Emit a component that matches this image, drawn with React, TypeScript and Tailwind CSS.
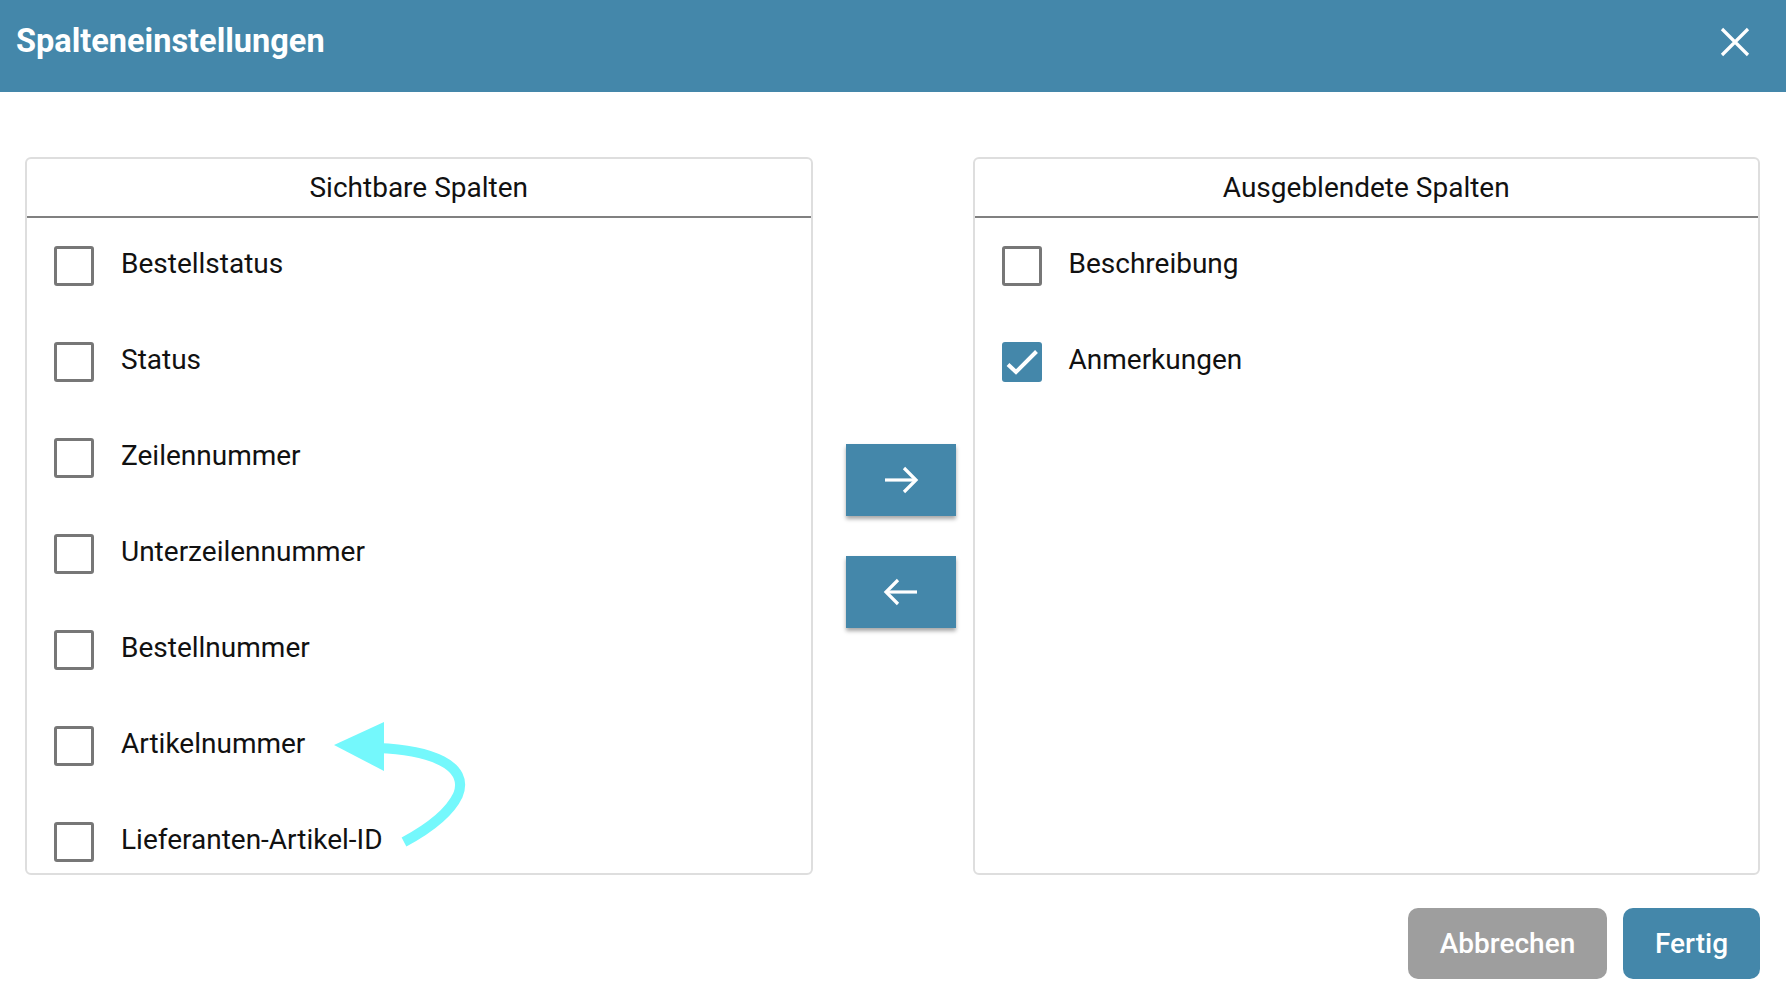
import { useState } from 'react';

const visibleCols = [
  'Bestellstatus',
  'Status',
  'Zeilennummer',
  'Unterzeilennummer',
  'Bestellnummer',
  'Artikelnummer',
  'Lieferanten-Artikel-ID',
];

const hiddenCols = ['Beschreibung', 'Anmerkungen'];

function Checkbox({ checked }: { checked: boolean }) {
  if (checked) {
    return (
      <div className="w-[40px] h-[40px] rounded-[3px] bg-[#4487aa] shrink-0">
        <svg width="40" height="40" viewBox="0 0 40 40" fill="none">
          <path d="M6 22.5 L14 30 L34.5 9.5" stroke="white" strokeWidth="4" />
        </svg>
      </div>
    );
  }
  return <div className="w-[40px] h-[40px] rounded-[3px] border-[3px] border-[#777777] bg-white shrink-0" />;
}

function ColumnPanel({
  title,
  items,
  checked,
  onToggle,
}: {
  title: string;
  items: string[];
  checked: string[];
  onToggle: (name: string) => void;
}) {
  return (
    <div className="flex-1 flex flex-col border-2 border-[#dedede] rounded-[6px] overflow-hidden bg-white">
      {/* Panel header */}
      <div className="h-[59px] shrink-0 flex items-center justify-center border-b-2 border-[#808080] text-[28px] text-[#111]">
        {title}
      </div>
      <div className="flex-1 overflow-hidden">
        {items.map((name) => (
          <div key={name} className="h-[96px] flex items-center pl-[27px] cursor-pointer" onClick={() => onToggle(name)}>
            <Checkbox checked={checked.includes(name)} />
            <span className="ml-[27px] text-[28px] text-[#111] -translate-y-[2px]">{name}</span>
          </div>
        ))}
      </div>
    </div>
  );
}

function ArrowButton({ dir }: { dir: 'right' | 'left' }) {
  return (
    <button className="w-[110px] h-[72px] bg-[#4487aa] flex items-center justify-center shadow-[0_3px_4px_rgba(0,0,0,0.35)]">
      <svg width="40" height="40" viewBox="0 0 40 40" fill="none" stroke="white" strokeWidth="3.2">
        {dir === 'right' ? (
          <>
            <path d="M4 20 H35" />
            <path d="M23 8 L35 20 L23 32" />
          </>
        ) : (
          <>
            <path d="M5 20 H36" />
            <path d="M17 8 L5 20 L17 32" />
          </>
        )}
      </svg>
    </button>
  );
}

export default function App() {
  const [leftChecked, setLeftChecked] = useState<string[]>([]);
  const [rightChecked, setRightChecked] = useState<string[]>(['Anmerkungen']);

  const toggle = (list: string[], set: (v: string[]) => void) => (name: string) =>
    set(list.includes(name) ? list.filter((n) => n !== name) : [...list, name]);

  return (
    <div className="w-[1786px] h-[1008px] bg-white flex flex-col relative overflow-hidden" style={{ fontFamily: 'Roboto, "Noto Sans", sans-serif' }}>
      {/* Title bar */}
      <div className="h-[92px] shrink-0 bg-[#4487aa] flex items-center justify-between pl-[16px] pr-[36px] pb-[9px]">
        <h1 className="text-[32.5px] font-bold text-white">Spalteneinstellungen</h1>
        <button className="w-[30px] h-[30px] flex items-center justify-center">
          <svg width="30" height="30" viewBox="0 0 30 30" stroke="white" strokeWidth="3.2">
            <path d="M2 2 L28 28 M28 2 L2 28" />
          </svg>
        </button>
      </div>

      {/* Panels */}
      <div className="mt-[65px] h-[718px] flex pl-[25px] pr-[26px]">
        <ColumnPanel title="Sichtbare Spalten" items={visibleCols} checked={leftChecked} onToggle={toggle(leftChecked, setLeftChecked)} />
        <div className="w-[160px] shrink-0 flex flex-col gap-[40px] pt-[287px] pl-[33px]">
          <ArrowButton dir="right" />
          <ArrowButton dir="left" />
        </div>
        <ColumnPanel title="Ausgeblendete Spalten" items={hiddenCols} checked={rightChecked} onToggle={toggle(rightChecked, setRightChecked)} />
      </div>

      {/* Footer buttons */}
      <div className="mt-[33px] flex justify-end gap-[16px] pr-[26px]">
        <button className="w-[199px] h-[71px] rounded-[10px] bg-[#9e9e9e] text-white text-[28px] font-medium">Abbrechen</button>
        <button className="w-[137px] h-[71px] rounded-[10px] bg-[#4487aa] text-white text-[28px] font-medium">Fertig</button>
      </div>

      {/* Annotation arrow */}
      <svg className="absolute left-0 top-0 pointer-events-none" width="1786" height="1008">
        <path d="M378 748 C 430 750, 470 765, 458 795 C 450 812, 430 828, 404 842" stroke="#74f8fc" strokeWidth="10" fill="none" />
        <polygon points="334,745 384,722 384,771" fill="#74f8fc" />
      </svg>
    </div>
  );
}
